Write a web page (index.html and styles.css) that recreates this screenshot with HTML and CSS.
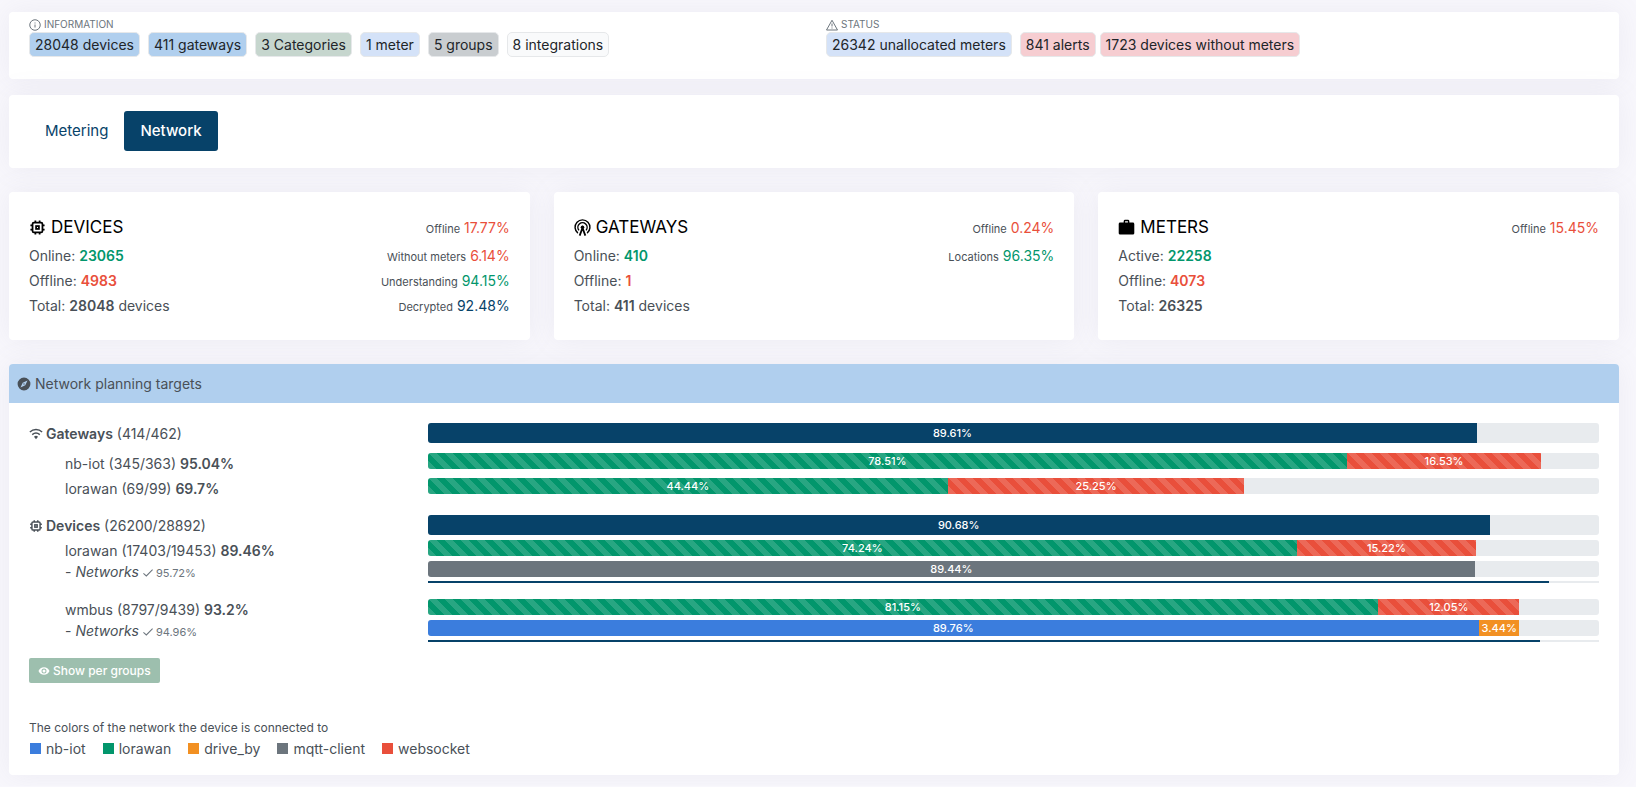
FILE: index.html
```
<!DOCTYPE html>
<html lang="en">
<head>
<meta charset="utf-8">
<meta name="viewport" content="width=device-width, initial-scale=1">
<title>Network dashboard</title>
<link rel="stylesheet" href="styles.css">
</head>
<body>
<svg class="sprite" aria-hidden="true">
  <symbol id="chip" viewBox="0 0 24 24"><g fill="none" stroke="currentColor" stroke-width="2.500"><rect x="5" y="5" width="14" height="14" rx="2"/><rect x="10" y="10" width="4" height="4"/><path d="M9 2v3M15 2v3M9 19v3M15 19v3M2 9h3M2 15h3M19 9h3M19 15h3"/></g></symbol>
  <symbol id="antenna" viewBox="0 0 24 24"><g fill="none" stroke="currentColor" stroke-width="2"><path d="M5.500 20A10.500 10.500 0 1 1 18.500 20"/><path d="M7 16A6.500 6.500 0 1 1 17 16"/></g><path fill="none" stroke="currentColor" stroke-width="2.500" d="M8 23.500l4-11 4 11"/><circle cx="12" cy="11.500" r="2.500" fill="currentColor"/></symbol>
  <symbol id="briefcase" viewBox="0 0 24 24"><path fill="currentColor" d="M10 1h4a2 2 0 0 1 2 2v2h5a2 2 0 0 1 2 2v13a2 2 0 0 1-2 2H3a2 2 0 0 1-2-2V7a2 2 0 0 1 2-2h5V3a2 2 0 0 1 2-2m4 4V3h-4v2h4z"/></symbol>
  <symbol id="compass" viewBox="0 0 24 24"><path fill="currentColor" d="M14.190 14.190L6 18l3.810-8.190L18 6m-6-5A11 11 0 0 0 1 12a11 11 0 0 0 11 11 11 11 0 0 0 11-11A11 11 0 0 0 12 1m0 9.900a1.100 1.100 0 0 0-1.100 1.100 1.100 1.100 0 0 0 1.100 1.100 1.100 1.100 0 0 0 1.100-1.100 1.100 1.100 0 0 0-1.100-1.100z"/></symbol>
  <symbol id="wifi" viewBox="0 0 24 24"><g fill="none" stroke="currentColor" stroke-width="2.500"><path d="M1.500 8.500a15.500 15.500 0 0 1 21 0"/><path d="M5.500 13a10 10 0 0 1 13 0"/></g><path fill="currentColor" d="M8.500 16.500a5.500 5.500 0 0 1 7 0L12 21z"/></symbol>
  <symbol id="eye" viewBox="0 0 24 24"><path fill="currentColor" d="M12 9a3 3 0 0 0-3 3 3 3 0 0 0 3 3 3 3 0 0 0 3-3 3 3 0 0 0-3-3m0 8a5 5 0 0 1-5-5 5 5 0 0 1 5-5 5 5 0 0 1 5 5 5 5 0 0 1-5 5m0-12.500C7 4.500 2.730 7.610 1 12c1.730 4.390 6 7.500 11 7.500s9.270-3.110 11-7.500c-1.730-4.390-6-7.500-11-7.500z"/></symbol>
  <symbol id="check" viewBox="0 0 24 24"><path fill="none" stroke="currentColor" stroke-width="2.500" d="M1 13l7 6L23 4"/></symbol>
  <symbol id="info" viewBox="0 0 24 24"><g fill="none" stroke="currentColor" stroke-width="2"><circle cx="12" cy="12" r="10.500"/><path d="M12 11v6M12 7v2"/></g></symbol>
  <symbol id="warn" viewBox="0 0 24 24"><g fill="none" stroke="currentColor" stroke-width="2" stroke-linejoin="round"><path d="M12 2.500L23 22H1z"/><path d="M12 9v6M12 17v2"/></g></symbol>
</svg>
<main class="page">
  <section class="card summary">
    <div>
      <h2 class="caption"><svg class="icon"><use href="#info"/></svg>INFORMATION</h2>
      <div class="badges">
        <span class="badge sky">28048 devices</span>
        <span class="badge sky">411 gateways</span>
        <span class="badge sage">3 Categories</span>
        <span class="badge pale">1 meter</span>
        <span class="badge gray">5 groups</span>
        <span class="badge light">8 integrations</span>
      </div>
    </div>
    <div>
      <h2 class="caption"><svg class="icon"><use href="#warn"/></svg>STATUS</h2>
      <div class="badges">
        <span class="badge pale">26342 unallocated meters</span>
        <span class="badge-pair"><span class="badge rose">841 alerts</span>
        <span class="badge rose">1723 devices without meters</span></span>
      </div>
    </div>
  </section>

  <nav class="card tabs">
    <a class="tab" href="#metering">Metering</a>
    <a class="tab active" href="#network">Network</a>
  </nav>

  <section class="stats">
    <article class="card stat">
      <div>
        <h3 class="stat-title"><svg class="icon"><use href="#chip"/></svg>DEVICES</h3>
        <p>Online: <b class="green">23065</b></p>
        <p>Offline: <b class="red">4983</b></p>
        <p>Total: <b>28048</b> devices</p>
      </div>
      <div class="rates">
        <p class="first"><small>Offline</small> <span class="red">17.77%</span></p>
        <p><small>Without meters</small> <span class="red">6.14%</span></p>
        <p><small>Understanding</small> <span class="green">94.15%</span></p>
        <p><small>Decrypted</small> <span class="navy">92.48%</span></p>
      </div>
    </article>
    <article class="card stat">
      <div>
        <h3 class="stat-title"><svg class="icon"><use href="#antenna"/></svg>GATEWAYS</h3>
        <p>Online: <b class="green">410</b></p>
        <p>Offline: <b class="red">1</b></p>
        <p>Total: <b>411</b> devices</p>
      </div>
      <div class="rates">
        <p class="first"><small>Offline</small> <span class="red">0.24%</span></p>
        <p><small>Locations</small> <span class="green">96.35%</span></p>
      </div>
    </article>
    <article class="card stat">
      <div>
        <h3 class="stat-title"><svg class="icon"><use href="#briefcase"/></svg>METERS</h3>
        <p>Active: <b class="green">22258</b></p>
        <p>Offline: <b class="red">4073</b></p>
        <p>Total: <b>26325</b></p>
      </div>
      <div class="rates">
        <p class="first"><small>Offline</small> <span class="red">15.45%</span></p>
      </div>
    </article>
  </section>

  <section class="card">
    <h2 class="plan-head"><svg class="icon"><use href="#compass"/></svg>Network planning targets</h2>
    <div class="plan-body">
      <div class="group">
        <div class="row lead">
          <div><svg class="icon"><use href="#wifi"/></svg><b>Gateways</b> (414/462)</div>
          <div><div class="bar tall"><span class="fill bg-navy" style="width:89.61%">89.61%</span></div></div>
        </div>
        <div class="row">
          <div class="sub">nb-iot (345/363) <b>95.04%</b></div>
          <div><div class="bar"><span class="fill bg-green striped" style="width:78.51%">78.51%</span><span class="fill bg-red striped" style="width:16.53%">16.53%</span></div></div>
        </div>
        <div class="row">
          <div class="sub">lorawan (69/99) <b>69.7%</b></div>
          <div><div class="bar"><span class="fill bg-green striped" style="width:44.44%">44.44%</span><span class="fill bg-red striped" style="width:25.25%">25.25%</span></div></div>
        </div>
      </div>

      <div class="group">
        <div class="row">
          <div><svg class="icon"><use href="#chip"/></svg><b>Devices</b> (26200/28892)</div>
          <div><div class="bar tall"><span class="fill bg-navy" style="width:90.68%">90.68%</span></div></div>
        </div>
        <div class="row tight">
          <div class="sub">lorawan (17403/19453) <b>89.46%</b></div>
          <div><div class="bar"><span class="fill bg-green striped" style="width:74.24%">74.24%</span><span class="fill bg-red striped" style="width:15.22%">15.22%</span></div></div>
        </div>
        <div class="row tight">
          <div class="sub">- <i>Networks</i> <span class="seen"><svg class="icon"><use href="#check"/></svg>95.72%</span></div>
          <div><div class="bar"><span class="fill bg-gray" style="width:89.44%">89.44%</span></div>
          <div class="bar thin"><span class="fill bg-navy" style="width:95.72%"></span></div></div>
        </div>
      </div>

      <div class="group">
        <div class="row tight">
          <div class="sub">wmbus (8797/9439) <b>93.2%</b></div>
          <div><div class="bar"><span class="fill bg-green striped" style="width:81.15%">81.15%</span><span class="fill bg-red striped" style="width:12.05%">12.05%</span></div></div>
        </div>
        <div class="row tight">
          <div class="sub">- <i>Networks</i> <span class="seen"><svg class="icon"><use href="#check"/></svg>94.96%</span></div>
          <div><div class="bar"><span class="fill bg-blue" style="width:89.76%">89.76%</span><span class="fill bg-orange" style="width:3.44%">3.44%</span></div>
          <div class="bar thin"><span class="fill bg-navy" style="width:94.96%"></span></div></div>
        </div>
      </div>

      <button class="show" type="button"><svg class="icon"><use href="#eye"/></svg>Show per groups</button>

      <p class="note">The colors of the network the device is connected to</p>
      <ul class="legend">
        <li><span class="swatch bg-blue"></span>nb-iot</li>
        <li><span class="swatch bg-green"></span>lorawan</li>
        <li><span class="swatch bg-orange"></span>drive_by</li>
        <li><span class="swatch bg-gray"></span>mqtt-client</li>
        <li><span class="swatch bg-red"></span>websocket</li>
      </ul>
    </div>
  </section>
</main>
</body>
</html>
```

FILE: styles.css
```
:root {
  --navy: #074269;
  --green: #02966c;
  --red: #e94f3b;
  --gray: #6c757d;
  --blue: #3b7ddd;
  --orange: #f29022;
}
* { box-sizing: border-box; }
body {
  margin: 0;
  background: #f8f7fc;
  color: #495057;
  font: 14px/21px Inter, "Liberation Sans", sans-serif;
}
h2, h3, p, ul { margin: 0; padding: 0; font-weight: 400; }
b { font-weight: 600; }
.sprite { display: none; }
.icon { width: 14px; height: 14px; flex: none; }
.page { padding: 12px 17px 11px 9px; }
.card {
  background: #fff;
  border-radius: 4px;
  box-shadow: 0 0 28px rgba(140, 140, 170, 0.1);
}

.summary {
  display: grid;
  grid-template-columns: 1fr 1fr;
  gap: 24px;
  padding: 5px 20px 22px;
}
.caption {
  display: flex;
  align-items: center;
  gap: 3px;
  font-size: 10px;
  line-height: 15px;
  color: #6c757d;
}
.caption .icon { width: 12px; height: 12px; }
.badges { display: flex; flex-wrap: wrap; gap: 8px; }
.badge-pair { display: flex; gap: 4px; }
.badge {
  padding: 1px 5px;
  border: 1px solid #e6e8ea;
  border-radius: 5px;
  color: #212529;
}
.sky { background: #b0cfee; }
.sage { background: #c6d6ce; }
.pale { background: #d4e2f8; }
.gray { background: #c9cdd0; }
.light { background: #f9fafb; }
.rose { background: #f6cdd1; }

.tabs {
  display: flex;
  margin-top: 16px;
  padding: 16px 20px 17px;
  font-size: 15px;
  line-height: 24px;
}
.tab {
  padding: 8px 16px;
  border-radius: 3px;
  color: var(--navy);
  text-decoration: none;
}
.tab.active { background: var(--navy); color: #fff; font-weight: 500; }

.stats {
  display: grid;
  grid-template-columns: repeat(3, 1fr);
  gap: 24px;
  margin: 24px 0;
}
.stat {
  display: flex;
  justify-content: space-between;
  padding: 25px 20px 20px;
}
.stat p { margin-bottom: 4px; }
.stat-title {
  display: flex;
  align-items: center;
  gap: 5px;
  margin-bottom: 8px;
  color: #000;
  font-size: 17px;
  line-height: 20px;
}
.stat-title .icon { width: 17px; height: 17px; }
.rates { text-align: right; }
.rates .first { margin-bottom: 7px; }
.rates small { font-size: 11px; line-height: 1; }
.green { color: var(--green); }
.red { color: var(--red); }
.navy { color: var(--navy); }

.plan-head {
  display: flex;
  align-items: center;
  gap: 4px;
  padding: 9px 8px;
  border-radius: 4px 4px 0 0;
  background: #b0cfee;
  font-size: 14px;
}
.plan-body { padding: 20px 20px 16px; }
.group { margin-bottom: 16px; }
.row {
  display: grid;
  grid-template-columns: 1fr 3fr;
  margin: 0 -12px 4px;
}
.row > div { padding: 0 12px; }
.row > .sub { padding-left: 48px; }
.row .icon { margin-right: 3px; vertical-align: -2px; }
.row.lead { margin-bottom: 9px; }
.row.tight { margin-bottom: 0; }
.row:last-child { margin-bottom: 0; }
.seen { color: #6c757d; font-size: 11px; line-height: 1; }
.row .seen .icon { width: 10px; height: 10px; vertical-align: -1px; }
.bar {
  display: flex;
  height: 16px;
  overflow: hidden;
  border-radius: 3px;
  background: #e8ebee;
}
.bar.tall { height: 20px; }
.bar.thin { height: 2px; margin-top: 4px; border-radius: 0; }
.fill {
  display: flex;
  align-items: center;
  justify-content: center;
  overflow: hidden;
  color: #fff;
  font-size: 11px;
  font-weight: 500;
}
.striped {
  background-image: linear-gradient(45deg, rgba(255, 255, 255, 0.15) 25%, transparent 25%, transparent 50%, rgba(255, 255, 255, 0.15) 50%, rgba(255, 255, 255, 0.15) 75%, transparent 75%);
  background-size: 16px 16px;
}
.bg-navy { background-color: var(--navy); }
.bg-green { background-color: var(--green); }
.bg-red { background-color: var(--red); }
.bg-gray { background-color: var(--gray); }
.bg-blue { background-color: var(--blue); }
.bg-orange { background-color: var(--orange); }

.show {
  display: flex;
  align-items: center;
  gap: 3px;
  padding: 4px 9px;
  border: 0;
  border-radius: 2px;
  background: #9dbfae;
  color: #fff;
  font: 500 12px/17px Inter, "Liberation Sans", sans-serif;
}
.show .icon { width: 12px; height: 12px; }
.note { margin-top: 35px; font-size: 12px; line-height: 20px; }
.legend { display: flex; flex-wrap: wrap; gap: 16px; list-style: none; }
.legend li { display: flex; align-items: center; gap: 5px; }
.swatch { width: 11px; height: 11px; margin-left: 1px; }
```
